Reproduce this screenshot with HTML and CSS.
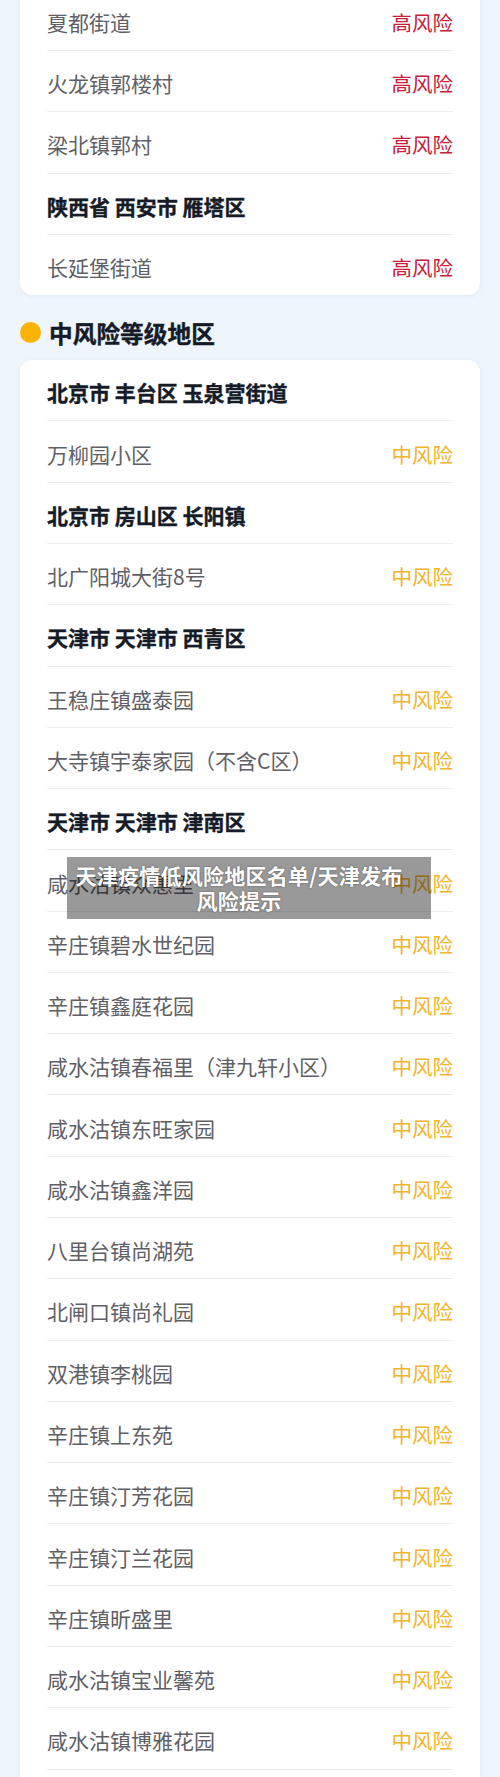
FILE: index.html
```html
<!DOCTYPE html>
<html>
<head>
	<meta charset="utf-8">
	<title>风险等级地区</title>
	<link rel="stylesheet" href="styles.css">
</head>
<body>
	<div class="page">
		<div class="card card-scrolled">
			<div class="row"><span class="place">夏都街道</span><span class="level high">高风险</span></div>
			<div class="row"><span class="place">火龙镇郭楼村</span><span class="level high">高风险</span></div>
			<div class="row"><span class="place">梁北镇郭村</span><span class="level high">高风险</span></div>
			<div class="row area">陕西省 西安市 雁塔区</div>
			<div class="row"><span class="place">长延堡街道</span><span class="level high">高风险</span></div>
		</div>

		<h2 class="section-title"><span class="dot"></span>中风险等级地区</h2>
		<div class="card card-open">
			<div class="row area">北京市 丰台区 玉泉营街道</div>
			<div class="row"><span class="place">万柳园小区</span><span class="level mid">中风险</span></div>
			<div class="row area">北京市 房山区 长阳镇</div>
			<div class="row"><span class="place">北广阳城大街8号</span><span class="level mid">中风险</span></div>
			<div class="row area">天津市 天津市 西青区</div>
			<div class="row"><span class="place">王稳庄镇盛泰园</span><span class="level mid">中风险</span></div>
			<div class="row"><span class="place">大寺镇宇泰家园（不含C区）</span><span class="level mid">中风险</span></div>
			<div class="row area">天津市 天津市 津南区</div>
			<div class="row"><span class="place">咸水沽镇众惠里</span><span class="level mid">中风险</span></div>
			<div class="row"><span class="place">辛庄镇碧水世纪园</span><span class="level mid">中风险</span></div>
			<div class="row"><span class="place">辛庄镇鑫庭花园</span><span class="level mid">中风险</span></div>
			<div class="row"><span class="place">咸水沽镇春福里（津九轩小区）</span><span class="level mid">中风险</span></div>
			<div class="row"><span class="place">咸水沽镇东旺家园</span><span class="level mid">中风险</span></div>
			<div class="row"><span class="place">咸水沽镇鑫洋园</span><span class="level mid">中风险</span></div>
			<div class="row"><span class="place">八里台镇尚湖苑</span><span class="level mid">中风险</span></div>
			<div class="row"><span class="place">北闸口镇尚礼园</span><span class="level mid">中风险</span></div>
			<div class="row"><span class="place">双港镇李桃园</span><span class="level mid">中风险</span></div>
			<div class="row"><span class="place">辛庄镇上东苑</span><span class="level mid">中风险</span></div>
			<div class="row"><span class="place">辛庄镇汀芳花园</span><span class="level mid">中风险</span></div>
			<div class="row"><span class="place">辛庄镇汀兰花园</span><span class="level mid">中风险</span></div>
			<div class="row"><span class="place">辛庄镇昕盛里</span><span class="level mid">中风险</span></div>
			<div class="row"><span class="place">咸水沽镇宝业馨苑</span><span class="level mid">中风险</span></div>
			<div class="row"><span class="place">咸水沽镇博雅花园</span><span class="level mid">中风险</span></div>
		</div>
	</div>

	<div class="caption">天津疫情低风险地区名单/天津发布<br>风险提示</div>
</body>
</html>
```

FILE: styles.css
```css
html, body {
	background: #eef5fc;
	margin: 0;
	padding: 0;
}
body {
	font-family: "Noto Sans CJK SC", "Noto Sans", sans-serif;
	height: 1777px;
	overflow: hidden;
	position: relative;
}
.page {
	padding: 0 20px;
}
.card {
	background: #fff;
	border-radius: 12px;
	box-shadow: 0 1px 4px rgba(120,150,190,.12);
	padding: 0 27px;
}
.card-scrolled {
	border-radius: 0 0 12px 12px;
	margin-top: -10.3px;
}
.card-open {
	padding-bottom: 40px;
}
.row {
	align-items: center;
	border-bottom: 1px solid #ececec;
	box-sizing: border-box;
	display: flex;
	height: 61.29px;
	justify-content: space-between;
	padding-top: 4px;
}
.card-scrolled .row:last-child {
	border-bottom: 0;
	height: 60.29px;
}
.place {
	color: #5f6066;
	font-size: 21px;
}
.level {
	font-size: 20.5px;
}
.level.high {
	color: #c82039;
}
.level.mid {
	color: #f1b42c;
}
.area {
	color: #151b27;
	font-size: 21px;
	font-weight: bold;
	justify-content: flex-start;
	-webkit-text-stroke: 0.4px #151b27;
	white-space: pre;
}
.section-title {
	align-items: center;
	color: #151b27;
	display: flex;
	font-size: 23.7px;
	font-weight: bold;
	height: 32px;
	margin: 22px 0 11px;
	-webkit-text-stroke: 0.4px #151b27;
}
.dot {
	background: #fbb300;
	border-radius: 50%;
	display: inline-block;
	height: 21px;
	margin-right: 8px;
	margin-top: -2px;
	width: 21px;
}
.caption {
	background: rgba(0,0,0,.4);
	box-sizing: border-box;
	color: #fff;
	font-size: 21px;
	font-weight: bold;
	height: 62px;
	left: 67px;
	letter-spacing: 0.25px;
	line-height: 25px;
	padding: 6px 20px 0 0;
	position: absolute;
	text-align: center;
	text-shadow: 0 0 2px rgba(0,0,0,.45);
	top: 857px;
	width: 364px;
}
```
